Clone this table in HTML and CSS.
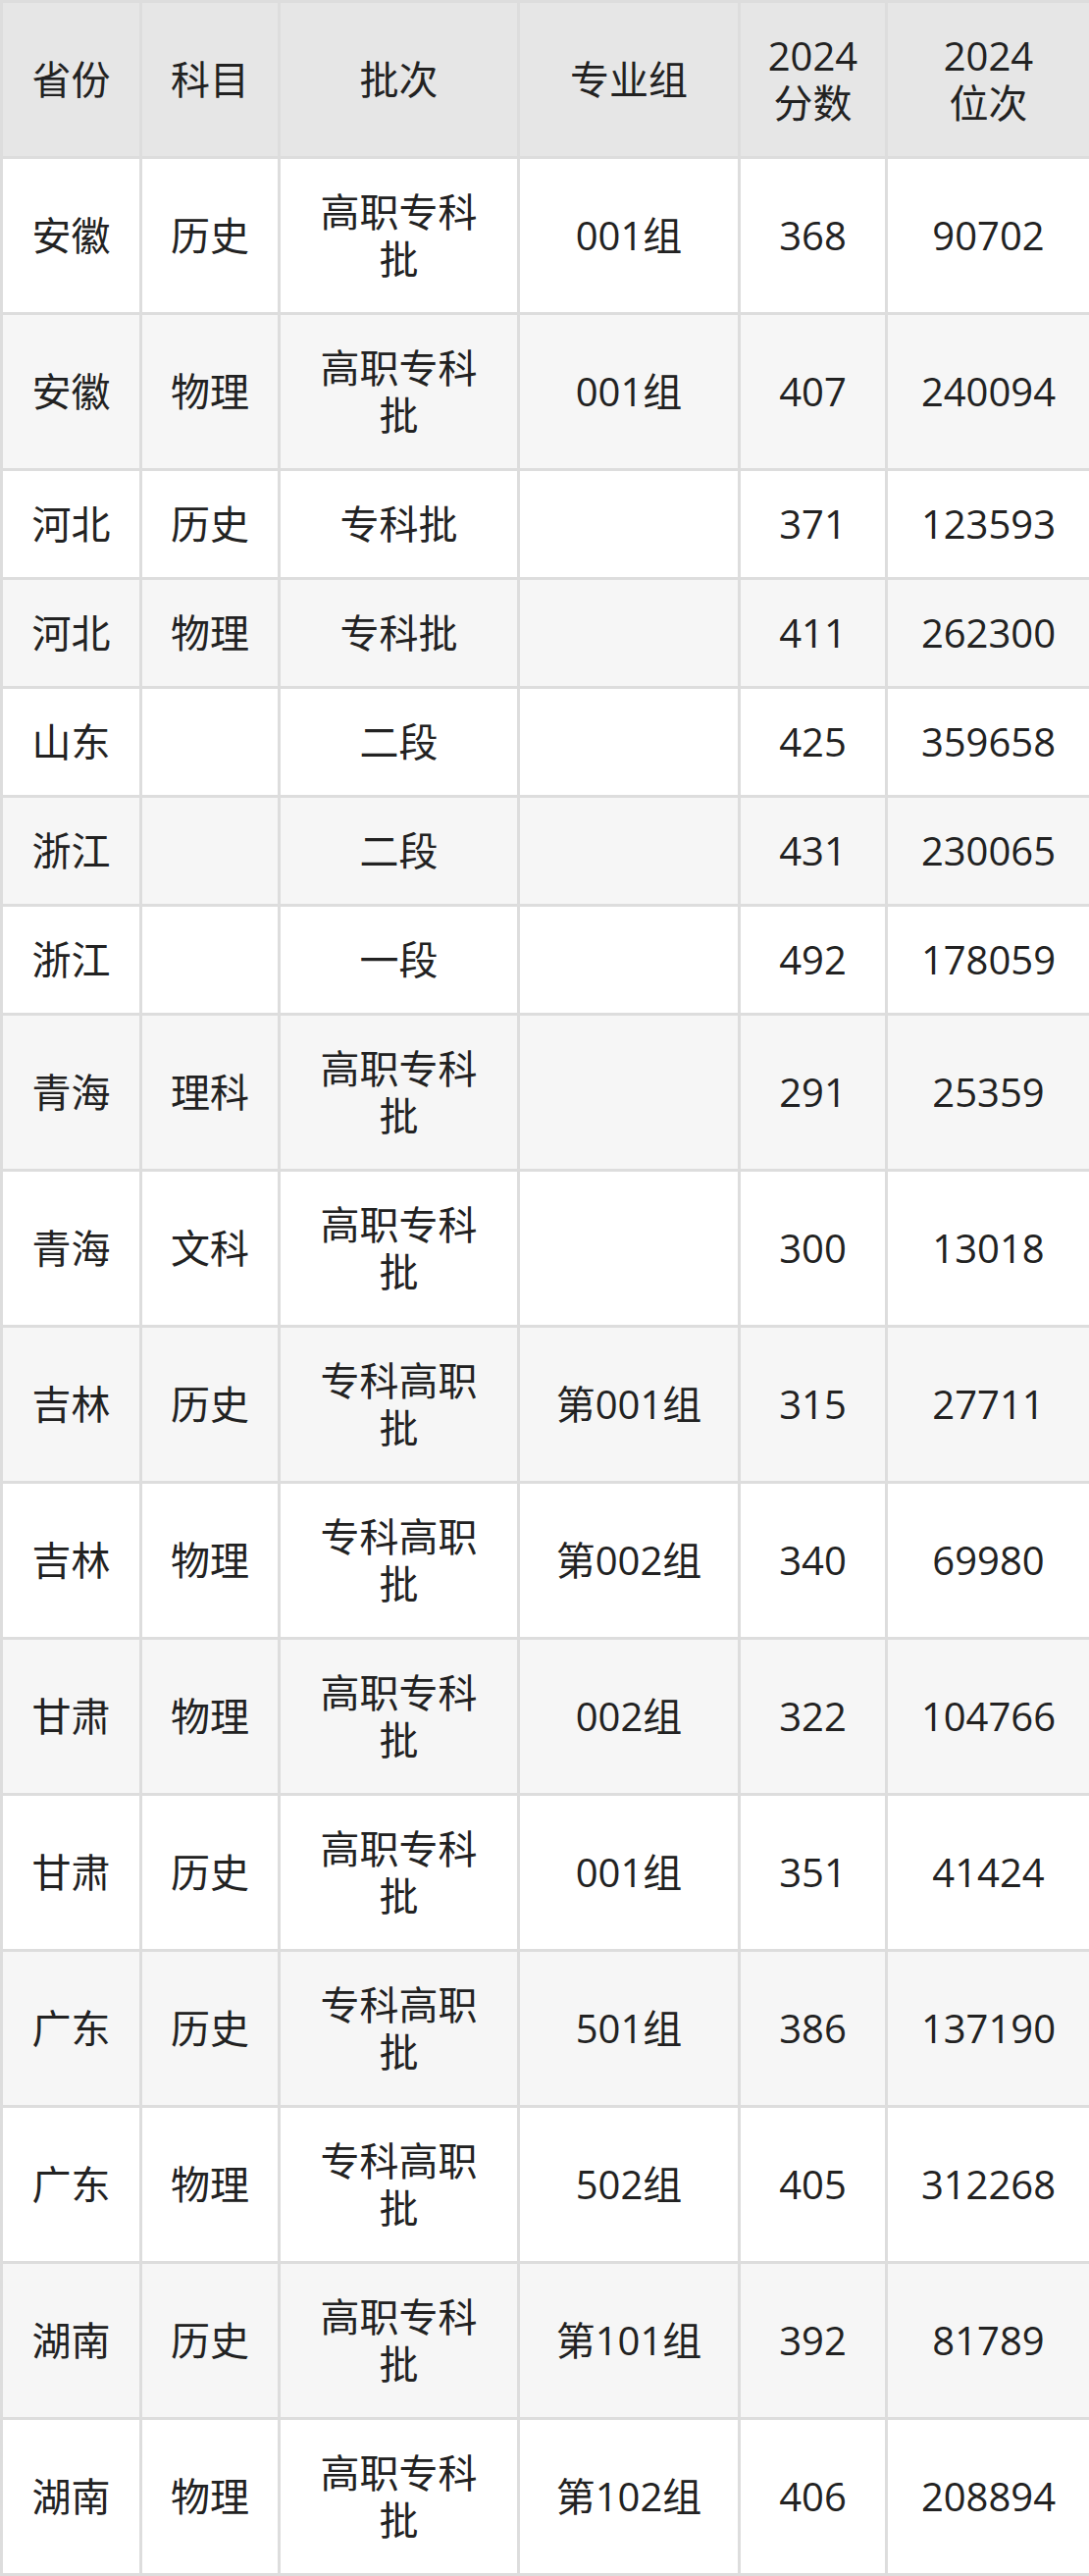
FILE: index.html
```html
<!DOCTYPE html>
<html lang="zh-CN">
<head>
<meta charset="utf-8">
<title>2024 分数位次</title>
<link rel="stylesheet" href="styles.css">
</head>
<body>
<table class="score-table">
  <colgroup>
    <col class="c-prov"><col class="c-subj"><col class="c-batch"><col class="c-group"><col class="c-score"><col class="c-rank">
  </colgroup>
  <thead>
    <tr><th>省份</th><th>科目</th><th>批次</th><th>专业组</th><th>2024<br>分数</th><th>2024<br>位次</th></tr>
  </thead>
  <tbody>
    <tr><td>安徽</td><td>历史</td><td>高职专科批</td><td>001组</td><td>368</td><td>90702</td></tr>
    <tr><td>安徽</td><td>物理</td><td>高职专科批</td><td>001组</td><td>407</td><td>240094</td></tr>
    <tr><td>河北</td><td>历史</td><td>专科批</td><td></td><td>371</td><td>123593</td></tr>
    <tr><td>河北</td><td>物理</td><td>专科批</td><td></td><td>411</td><td>262300</td></tr>
    <tr><td>山东</td><td></td><td>二段</td><td></td><td>425</td><td>359658</td></tr>
    <tr><td>浙江</td><td></td><td>二段</td><td></td><td>431</td><td>230065</td></tr>
    <tr><td>浙江</td><td></td><td>一段</td><td></td><td>492</td><td>178059</td></tr>
    <tr><td>青海</td><td>理科</td><td>高职专科批</td><td></td><td>291</td><td>25359</td></tr>
    <tr><td>青海</td><td>文科</td><td>高职专科批</td><td></td><td>300</td><td>13018</td></tr>
    <tr><td>吉林</td><td>历史</td><td>专科高职批</td><td>第001组</td><td>315</td><td>27711</td></tr>
    <tr><td>吉林</td><td>物理</td><td>专科高职批</td><td>第002组</td><td>340</td><td>69980</td></tr>
    <tr><td>甘肃</td><td>物理</td><td>高职专科批</td><td>002组</td><td>322</td><td>104766</td></tr>
    <tr><td>甘肃</td><td>历史</td><td>高职专科批</td><td>001组</td><td>351</td><td>41424</td></tr>
    <tr><td>广东</td><td>历史</td><td>专科高职批</td><td>501组</td><td>386</td><td>137190</td></tr>
    <tr><td>广东</td><td>物理</td><td>专科高职批</td><td>502组</td><td>405</td><td>312268</td></tr>
    <tr><td>湖南</td><td>历史</td><td>高职专科批</td><td>第101组</td><td>392</td><td>81789</td></tr>
    <tr><td>湖南</td><td>物理</td><td>高职专科批</td><td>第102组</td><td>406</td><td>208894</td></tr>
  </tbody>
</table>
</body>
</html>
```
FILE: styles.css
```css
html, body {
  margin: 0;
  padding: 0;
  background: #ffffff;
}

body {
  font-family: "Open Sans", "Noto Sans CJK SC", "Noto Sans", sans-serif;
  color: #222222;
}

.score-table {
  width: 1110px;
  table-layout: fixed;
  border-collapse: collapse;
  border: 3px solid #dddddd;
}

.c-prov { width: 142px; }
.c-subj { width: 141px; }
.c-batch { width: 244px; }
.c-group { width: 225px; }
.c-score { width: 150px; }
.c-rank { width: 208px; }

.score-table th,
.score-table td {
  border: 3px solid #dddddd;
  padding: 30px 24px;
  font-size: 40px;
  line-height: 48px;
  font-weight: 400;
  text-align: center;
  vertical-align: middle;
}

.score-table th {
  background: #e6e6e6;
}

.score-table tbody tr:nth-child(even) td {
  background: #f6f6f6;
}

.score-table tbody tr:nth-child(odd) td {
  background: #ffffff;
}
```
